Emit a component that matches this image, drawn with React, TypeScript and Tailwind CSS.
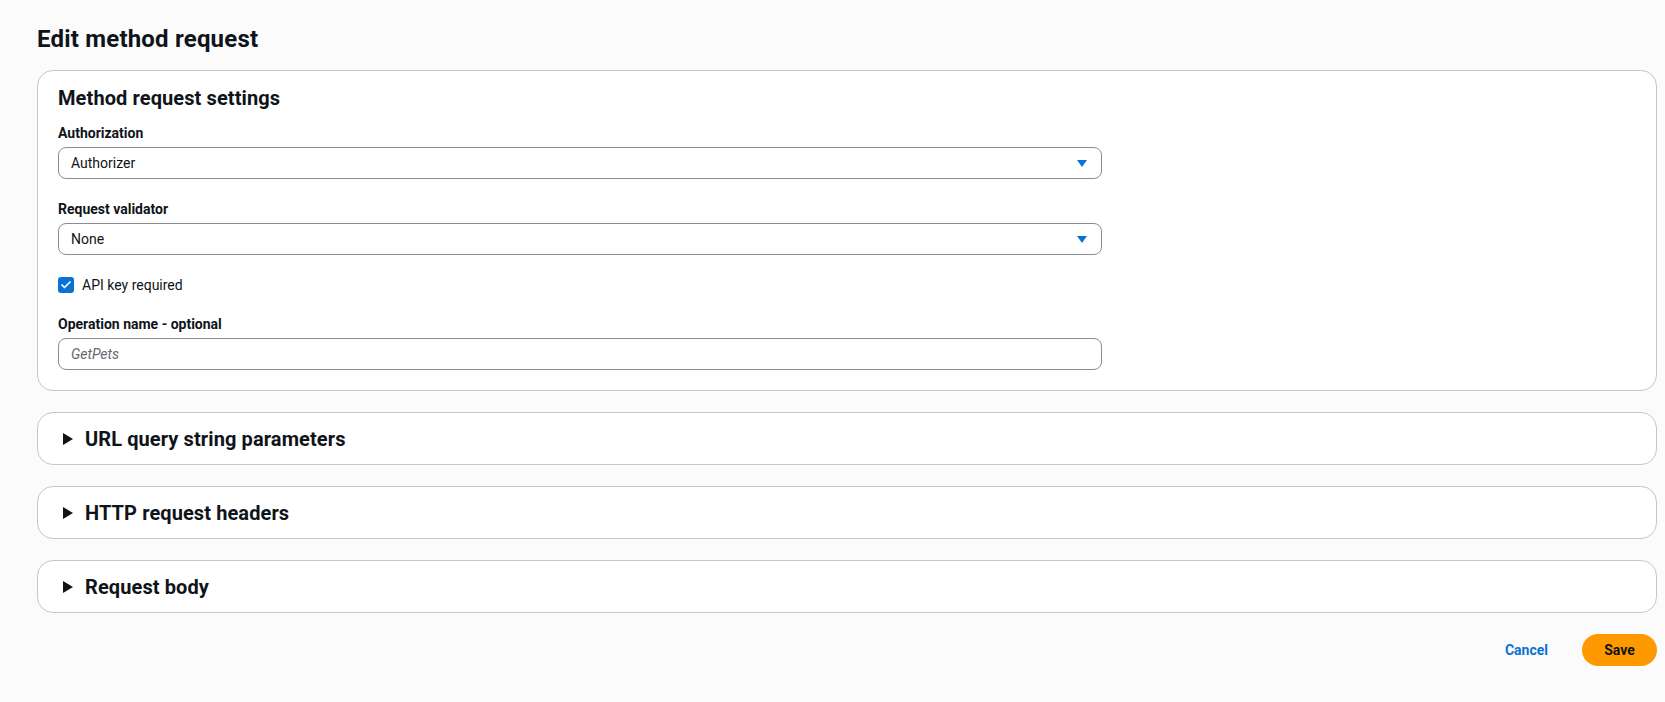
import { Check } from 'lucide-react';

function Caret() {
  return (
    <svg width="10" height="7" viewBox="0 0 10 7" className="shrink-0">
      <path d="M0 0h10L5 7z" fill="#0972d3" />
    </svg>
  );
}

function SelectBox({ value }: { value: string }) {
  return (
    <div className="h-8 w-[1044px] rounded-lg border border-[#8c8c94] bg-white flex items-center justify-between pl-3 pr-[14px]">
      <span className="text-[14px] text-[#0f141a]">{value}</span>
      <Caret />
    </div>
  );
}

function Label({ children }: { children: React.ReactNode }) {
  return <div className="text-[14px] font-bold leading-[22px] text-[#0f141a] mb-[3px]">{children}</div>;
}

function Collapsed({ title }: { title: string }) {
  return (
    <div className="h-[53px] rounded-2xl border border-[#c6c6cd] bg-white flex items-center pl-[25px]">
      <svg width="10" height="12" viewBox="0 0 10 12" className="shrink-0">
        <path d="M0 0l10 6-10 6z" fill="#0f141a" />
      </svg>
      <span className="ml-[12px] text-[20px] font-bold text-[#0f141a] leading-[28px] tracking-[0.1px]">{title}</span>
    </div>
  );
}

export default function App() {
  return (
    <div
      className="min-h-[702px] bg-[#fbfbfb] pl-[37px] pr-2 pt-6 text-[#0f141a]"
      style={{ fontFamily: 'Roboto, "Open Sans", Arial, sans-serif' }}
    >
      <h1 className="text-[24px] font-bold leading-[30px] mb-4 tracking-[0.2px]">Edit method request</h1>

      <div className="flex flex-col gap-[21px]">
        <div className="rounded-2xl border border-[#c6c6cd] bg-white pl-5 pr-5 pt-[13px] pb-[20px]">
          <h2 className="text-[20px] font-bold leading-[28px] mb-[10px] tracking-[0.1px]">Method request settings</h2>

          <Label>Authorization</Label>
          <SelectBox value="Authorizer" />

          <div className="mt-[19px]">
            <Label>Request validator</Label>
            <SelectBox value="None" />
          </div>

          <label className="mt-[19px] flex items-center h-[22px] gap-2">
            <span className="w-4 h-4 rounded-[3px] bg-[#0972d3] flex items-center justify-center">
              <Check size={12} strokeWidth={3.5} color="#ffffff" />
            </span>
            <span className="text-[14px]">API key required</span>
          </label>

          <div className="mt-[17px]">
            <Label>Operation name - optional</Label>
            <div className="h-8 w-[1044px] rounded-lg border border-[#8c8c94] bg-white flex items-center pl-3">
              <span className="text-[14px] italic text-[#656871]">GetPets</span>
            </div>
          </div>
        </div>

        <Collapsed title="URL query string parameters" />
        <Collapsed title="HTTP request headers" />
        <Collapsed title="Request body" />
      </div>

      <div className="flex justify-end items-center mt-[21px]">
        <button className="text-[14px] font-bold text-[#0972d3] mr-[34px]">Cancel</button>
        <button className="h-8 w-[75px] rounded-full bg-[#ff9900] text-[14px] font-bold text-[#0f141a]">Save</button>
      </div>
    </div>
  );
}
